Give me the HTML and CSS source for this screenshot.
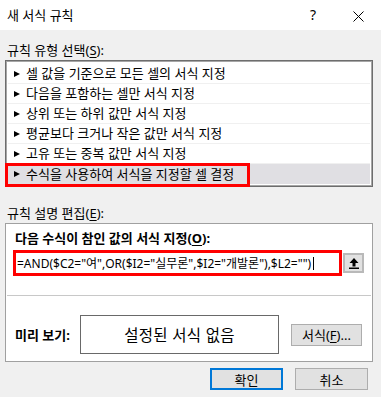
FILE: index.html
```html
<!DOCTYPE html>
<html>
	<head>
		<meta charset="UTF-8" />
		<title>새 서식 규칙</title>
		<link rel="stylesheet" href="styles.css">
	</head>
	<body>
<div class="dialog">
  <div class="titlebar">
    <span class="title">새 서식 규칙</span>
    <span class="help">?</span>
    <span class="close">
      <svg width="11" height="11" viewBox="0 0 11 11"><path d="M0.5 0.5L10.5 10.5M10.5 0.5L0.5 10.5" stroke="#000" stroke-width="1" fill="none"/></svg>
    </span>
  </div>
  <div class="content">
    <div class="label">규칙 유형 선택(<u>S</u>):</div>
    <ul class="rule-list">
      <li><i class="arrow"></i>셀 값을 기준으로 모든 셀의 서식 지정</li>
      <li><i class="arrow"></i>다음을 포함하는 셀만 서식 지정</li>
      <li><i class="arrow"></i>상위 또는 하위 값만 서식 지정</li>
      <li><i class="arrow"></i>평균보다 크거나 작은 값만 서식 지정</li>
      <li><i class="arrow"></i>고유 또는 중복 값만 서식 지정</li>
      <li class="selected"><i class="arrow"></i>수식을 사용하여 서식을 지정할 셀 결정<span class="mark"></span></li>
    </ul>
    <div class="label label-edit">규칙 설명 편집(<u>E</u>):</div>
    <div class="edit-box">
      <div class="edit-title">다음 수식이 참인 값의 서식 지정(<u>O</u>):</div>
      <div class="formula-row">
        <div class="formula">=AND($C2="여",OR($I2="실무론",$I2="개발론"),$L2="")<span class="caret"></span></div>
        <button class="ref-btn">
          <svg width="10" height="11" viewBox="0 0 10 11"><path d="M5 0L9.5 5H6.5V8.5H3.5V5H0.5Z" fill="#000"/><rect x="0" y="9.5" width="10" height="1.5" fill="#000"/></svg>
        </button>
      </div>
      <div class="preview-row">
        <span class="preview-label">미리 보기:</span>
        <div class="preview">설정된 서식 없음</div>
        <button class="btn btn-format">서식(<u>F</u>)...</button>
      </div>
    </div>
    <div class="actions">
      <button class="btn btn-ok">확인</button>
      <button class="btn">취소</button>
    </div>
  </div>
</div>
	</body>
</html>
```

FILE: styles.css
```css
* {
	margin: 0;
	padding: 0;
	box-sizing: border-box;
}

body {
	background-color: #f0f0f0;
	font-family: "Noto Sans", "Noto Sans CJK KR", sans-serif;
	font-size: 13px;
	color: #000;
	width: 381px;
	height: 397px;
	overflow: hidden;
}

u {
	text-decoration: underline;
	text-underline-offset: 2px;
}

.titlebar {
	height: 30px;
	background-color: #fff;
	display: flex;
	align-items: center;
	padding-left: 7px;
}

.titlebar .title {
	line-height: 16px;
	flex: 1;
}

.titlebar .help {
	font-size: 14px;
	width: 43px;
	line-height: 16px;
}

.titlebar .close {
	width: 28px;
	display: flex;
	padding-top: 2px;
}

.content {
	padding: 0 8px 0 5px;
}

.label {
	line-height: 16px;
	margin-top: 12px;
	padding-left: 2px;
}

.label-edit {
	margin-top: 18px;
}

.rule-list {
	list-style: none;
	margin-top: 2px;
	border: 1px solid #6d6d6d;
	box-shadow: inset 0 0 0 1px #a6a6a6;
	background-color: #fff;
	padding: 3px 2px 2px;
}

.rule-list li {
	height: 20px;
	line-height: 19px;
	border-bottom: 1px solid #f0f0f0;
	display: flex;
	align-items: center;
	padding-left: 6px;
	position: relative;
}

.rule-list li:last-child {
	border-bottom: none;
}

.rule-list .arrow {
	width: 0;
	height: 0;
	border-left: 6px solid #000;
	border-top: 3.5px solid transparent;
	border-bottom: 3.5px solid transparent;
	margin-right: 6px;
}

.rule-list .selected {
	background-color: #e0dfe3;
}

.rule-list .mark {
	position: absolute;
	left: -3px;
	top: -1px;
	width: 245px;
	height: 24px;
	border: 3px solid #f00;
}

.edit-box {
	margin-top: 2px;
	border: 1px solid #a0a0a0;
	background-color: #fff;
	padding: 6px 0 7px 7px;
}

.edit-title {
	font-weight: bold;
	line-height: 16px;
	padding-left: 2px;
}

.formula-row {
	display: flex;
	align-items: center;
	margin-top: 4px;
}

.formula {
	width: 329px;
	height: 26px;
	border: 3px solid #f00;
	font-size: 12px;
	line-height: 19px;
	padding-left: 1px;
	white-space: nowrap;
	display: flex;
	align-items: center;
}

.formula .caret {
	display: inline-block;
	width: 1px;
	height: 13px;
	background-color: #000;
	margin-left: 2px;
}

.ref-btn {
	width: 21px;
	height: 20px;
	margin-left: 1px;
	border: 2px solid #b9b9b9;
	background-color: #e1e1e1;
	display: flex;
	align-items: center;
	justify-content: center;
}

.preview-row {
	margin-top: 19px;
	margin-right: 1px;
	border-top: 1px solid #c8c8c8;
	padding-top: 19px;
	display: flex;
	align-items: center;
	margin-left: -6px;
	padding-left: 8px;
}

.preview-label {
	width: 65px;
	font-weight: bold;
}

.preview {
	width: 199px;
	height: 39px;
	border: 1px solid #696969;
	font-size: 15.5px;
	display: flex;
	align-items: center;
	justify-content: center;
	letter-spacing: 0.3px;
}

.btn {
	font-family: inherit;
	font-size: 13px;
	background-color: #e1e1e1;
	border: 1px solid #adadad;
	height: 22px;
	color: #000;
}

.btn-format {
	width: 71px;
	margin-left: 12px;
}

.actions {
	display: flex;
	justify-content: flex-end;
	gap: 12px;
	margin-top: 6px;
	padding-right: 5px;
}

.actions .btn {
	width: 73px;
}

.actions .btn-ok {
	border: 2px solid #0078d7;
}
```
